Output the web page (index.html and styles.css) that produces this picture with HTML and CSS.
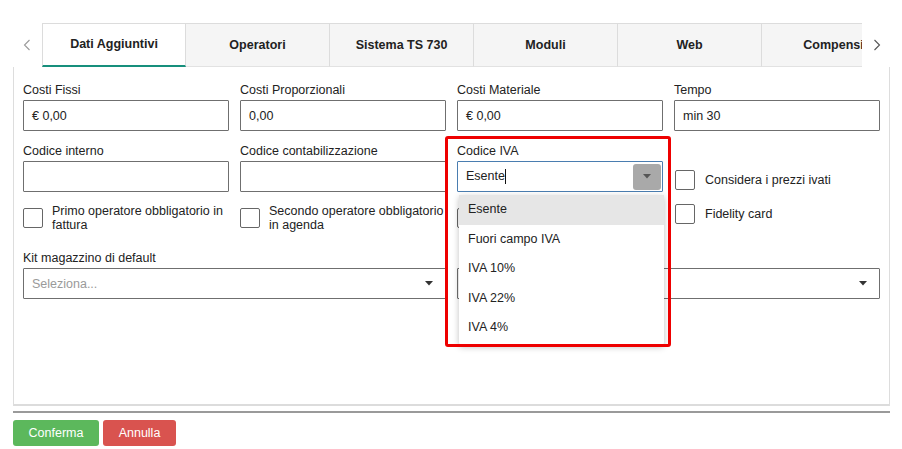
FILE: index.html
```html
<!DOCTYPE html>
<html lang="it">
<head>
<meta charset="utf-8">
<title>Dati Aggiuntivi</title>
<link rel="stylesheet" href="styles.css">
</head>
<body>
<div class="page">
  <div class="tabbar">
    <div class="tab-arrow left">
      <svg width="8" height="12" viewBox="0 0 8 12"><polyline points="6.5,1 1.5,6 6.5,11" fill="none" stroke="#9a9a9a" stroke-width="1.1"/></svg>
    </div>
    <div class="tabs">
      <div class="tab active">Dati Aggiuntivi</div>
      <div class="tab">Operatori</div>
      <div class="tab">Sistema TS 730</div>
      <div class="tab">Moduli</div>
      <div class="tab">Web</div>
      <div class="tab">Compensi</div>
    </div>
    <div class="tab-arrow right">
      <svg width="8" height="12" viewBox="0 0 8 12"><polyline points="1.5,1 6.5,6 1.5,11" fill="none" stroke="#555" stroke-width="1.1"/></svg>
    </div>
  </div>

  <div class="panel">
    <div class="form">
      <div class="field">
        <label class="lbl">Costi Fissi</label>
        <div class="input">€ 0,00</div>
      </div>
      <div class="field">
        <label class="lbl">Costi Proporzionali</label>
        <div class="input">0,00</div>
      </div>
      <div class="field">
        <label class="lbl">Costi Materiale</label>
        <div class="input">€ 0,00</div>
      </div>
      <div class="field">
        <label class="lbl">Tempo</label>
        <div class="input">min 30</div>
      </div>

      <div class="field">
        <label class="lbl">Codice interno</label>
        <div class="input"></div>
      </div>
      <div class="field">
        <label class="lbl">Codice contabilizzazione</label>
        <div class="input"></div>
      </div>
      <div class="field iva">
        <label class="lbl">Codice IVA</label>
        <div class="input combo"><span class="typed">Esente</span>
          <span class="combo-btn"><svg width="8" height="5" viewBox="0 0 8 5"><polygon points="0,0 8,0 4,4.5" fill="#555"/></svg></span>
        </div>
        <ul class="menu">
          <li class="hl">Esente</li>
          <li>Fuori campo IVA</li>
          <li>IVA 10%</li>
          <li>IVA 22%</li>
          <li>IVA 4%</li>
        </ul>
        <div class="annot"></div>
      </div>
      <div class="stack">
        <div class="check one"><span class="box"></span><span class="ctext">Considera i prezzi ivati</span></div>
        <div class="check two"><span class="box"></span><span class="ctext">Fidelity card</span></div>
      </div>

      <div class="check row3"><span class="box"></span><span class="ctext">Primo operatore obbligatorio in fattura</span></div>
      <div class="check row3 wide"><span class="box"></span><span class="ctext">Secondo operatore obbligatorio in agenda</span></div>
      <div class="check row3"><span class="box"></span></div>

      <div class="field span2">
        <label class="lbl">Kit magazzino di default</label>
        <div class="input select"><span class="ph">Seleziona...</span>
          <svg class="caret" width="8" height="5" viewBox="0 0 8 5"><polygon points="0,0 8,0 4,4.5" fill="#333"/></svg>
        </div>
      </div>
      <div class="field span2">
        <label class="lbl">&nbsp;</label>
        <div class="input select"><span class="ph"></span>
          <svg class="caret" width="8" height="5" viewBox="0 0 8 5"><polygon points="0,0 8,0 4,4.5" fill="#333"/></svg>
        </div>
      </div>
    </div>
  </div>

  <div class="footer">
    <button class="btn ok">Conferma</button>
    <button class="btn cancel">Annulla</button>
  </div>
</div>
</body>
</html>
```
FILE: styles.css
```css
* { box-sizing: border-box; }
html, body { margin: 0; padding: 0; background: #fff; }
body {
  font-family: "Liberation Sans", Arial, sans-serif;
  font-size: 12.5px;
  color: #222;
}
.page { padding: 23px 12px 0 13px; }

.tabbar { display: flex; height: 44px; }
.tab-arrow { display: flex; align-items: center; justify-content: center; }
.tab-arrow.left { width: 29px; padding-right: 2px; }
.tab-arrow.right { width: 28px; padding-left: 2px; }
.tabs { flex: 1; display: flex; overflow: hidden; }
.tab {
  flex: 0 0 144px;
  height: 44px;
  display: flex; align-items: center; justify-content: center;
  padding-bottom: 1px;
  background: #f5f5f5;
  border-top: 1px solid #dcdcdc;
  border-right: 1px solid #dcdcdc;
  border-bottom: 1px solid #e2e2e2;
  font-weight: bold;
  color: #222;
  white-space: nowrap;
}
.tab:first-child { border-left: 1px solid #dcdcdc; }
.tab.active { background: #fff; border-bottom: 2px solid #178f7c; }

.panel {
  height: 339px;
  border: 1px solid #dddddd;
  border-top: none;
  border-bottom: 2px solid #dcdcdc;
  padding: 15px 9px 0 9px;
}
.form {
  display: grid;
  grid-template-columns: repeat(4, 206px);
  column-gap: 11px;
  row-gap: 12px;
  align-items: start;
}
.field { position: relative; }
.lbl { display: block; height: 16px; line-height: 16px; margin-bottom: 2px; color: #222; }
.input {
  height: 31px;
  border: 1px solid #6f6f6f;
  border-radius: 1px;
  padding: 0 8px;
  display: flex; align-items: center;
  background: #fff;
  color: #222;
}
.span2 { grid-column: span 2; margin-top: 6px; }
.select { justify-content: space-between; padding-right: 12px; }
.ph { color: #9a9a9a; }
.caret { display: block; }

.iva { z-index: 5; }
.combo { border-color: #4a7db0; padding-right: 1px; justify-content: space-between; }
.typed { border-right: 1px solid #111; line-height: 15px; padding-right: 0; }
.combo-btn {
  width: 28px; height: 26px;
  background: #a9a9a9;
  border-radius: 3px;
  display: flex; align-items: center; justify-content: center;
}
.menu {
  position: absolute;
  left: 2px; top: 52px;
  width: 205px;
  margin: 0; padding: 0 0 2px 0;
  list-style: none;
  background: #fff;
  box-shadow: 0 2px 6px rgba(0,0,0,0.25);
  border-radius: 0 0 3px 3px;
}
.menu li { height: 29.5px; line-height: 29.5px; padding-left: 9px; color: #222; }
.menu li.hl { background: #e6e6e6; }
.annot {
  position: absolute;
  left: -12px; top: -7px;
  width: 226px; height: 211px;
  border: 3px solid #ee0000;
  border-radius: 3px;
  pointer-events: none;
}

.stack { grid-row: span 2; padding-top: 27px; display: flex; flex-direction: column; gap: 14px; padding-left: 1px; }
.check { display: flex; align-items: center; }
.box {
  flex: 0 0 20px; height: 20px;
  border: 1px solid #666;
  border-radius: 2px;
  background: #fff;
}
.ctext { line-height: 14px; padding-left: 9px; }
.stack .ctext { padding-left: 10px; }
.row3 { min-height: 28px; margin-top: 0; }
.row3.wide .ctext { margin-right: -8px; }

.footer {
  margin-top: 5px;
  border-top: 2px solid #9a9a9a;
  padding-top: 7px;
  display: flex; gap: 4px;
}
.btn {
  font-family: "Liberation Sans", Arial, sans-serif;
  font-size: 12.5px;
  height: 26px;
  border: none;
  border-radius: 3px;
  color: #fff;
  padding: 0;
}
.btn.ok { width: 86px; background: #5cb85c; }
.btn.cancel { width: 73px; background: #d9534f; }
```
